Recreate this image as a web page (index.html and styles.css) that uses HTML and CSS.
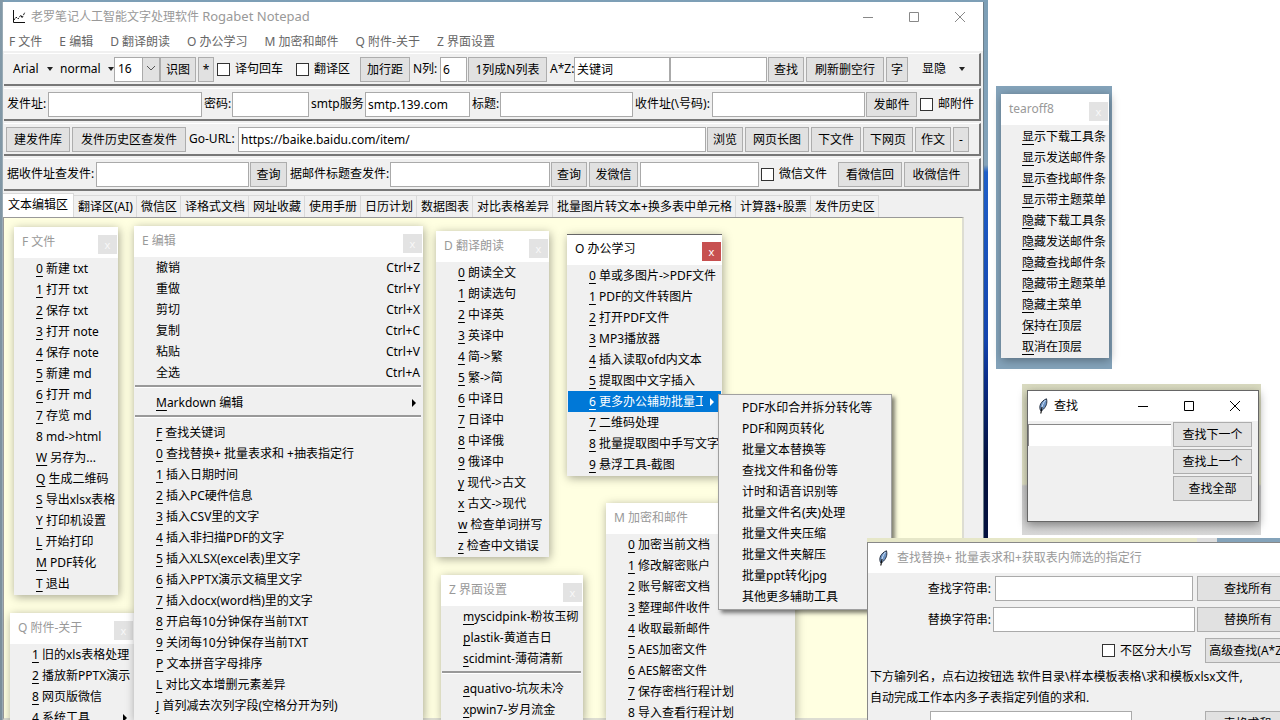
FILE: index.html
```html
<!DOCTYPE html>
<html lang="zh-CN">
<head>
  <meta charset="utf-8">
  <title>老罗笔记人工智能文字处理软件 Rogabet Notepad</title>
  <link rel="stylesheet" href="styles.css">
</head>
<body>
  <svg class="defs">
    <symbol id="feather" viewBox="0 0 12 16">
      <path d="M3.500 12.500C1.500 8 4 3 9.500.800c1 4 0 8-4.500 11.700z" fill="#6c93c4" stroke="#1a2436" stroke-width=".9"/>
      <path d="M8.500 2C6 5 5 8 4.500 12" fill="none" stroke="#d5e5f7" stroke-width=".9"/>
      <path d="M5 9L3.800 15.500" stroke="#111" stroke-width="1.200"/>
    </symbol>
  </svg>

  <div class="desktop"></div>

  <!-- main window -->
  <div class="main-window">
    <div class="titlebar">
      <svg class="logo" width="14" height="14" viewBox="0 0 14 14" fill="none" stroke="#111"><path d="M1.500 0v12.500H13"/><path d="M2 10l2-3 2 2 3-4 1 3 3-6" stroke-dasharray="2 1"/></svg>
      <span class="title">老罗笔记人工智能文字处理软件 <span class="latin">Rogabet Notepad</span></span>
      <button class="win-btn" aria-label="最小化"><svg width="12" height="12"><path d="M1 6.500h10"/></svg></button>
      <button class="win-btn" aria-label="最大化"><svg width="12" height="12"><path d="M1.500 1.500h9v9h-9z"/></svg></button>
      <button class="win-btn" aria-label="关闭"><svg width="12" height="12"><path d="M1 1l10 10M11 1L1 11"/></svg></button>
    </div>
    <div class="menubar">
      <button>F 文件</button>
      <button>E 编辑</button>
      <button>D 翻译朗读</button>
      <button>O 办公学习</button>
      <button>M 加密和邮件</button>
      <button>Q 附件-关于</button>
      <button>Z 界面设置</button>
    </div>

    <div class="toolbar bar-format">
      <button class="drop">Arial</button>
      <button class="drop">normal</button>
      <select aria-label="字号"><option>16</option></select>
      <button class="btn">识图</button>
      <button class="btn">*</button>
      <label class="check"><input type="checkbox">译句回车</label>
      <label class="check"><input type="checkbox">翻译区</label>
      <button class="btn">加行距</button>
      <label for="cols">N列:</label>
      <input type="text" id="cols" value="6">
      <button class="btn">1列成N列表</button>
      <label for="kw">A*Z:</label>
      <input type="text" id="kw" value="关键词">
      <input type="text" aria-label="替换词" class="joined">
      <button class="btn">查找</button>
      <button class="btn">刷新删空行</button>
      <button class="btn">字</button>
      <button class="drop">显隐</button>
    </div>
    <div class="toolbar bar-mail">
      <label for="from">发件址:</label>
      <input type="text" id="from">
      <label for="pwd">密码:</label>
      <input type="password" id="pwd">
      <label for="smtp">smtp服务</label>
      <input type="text" id="smtp" value="smtp.139.com">
      <label for="subject">标题:</label>
      <input type="text" id="subject">
      <label for="to">收件址(\号码):</label>
      <input type="text" id="to">
      <button class="btn">发邮件</button>
      <label class="check"><input type="checkbox">邮附件</label>
    </div>
    <div class="toolbar bar-url">
      <button class="btn">建发件库</button>
      <button class="btn">发件历史区查发件</button>
      <label for="url">Go-URL:</label>
      <input type="text" id="url" value="https://baike.baidu.com/item/">
      <button class="btn">浏览</button>
      <button class="btn">网页长图</button>
      <button class="btn">下文件</button>
      <button class="btn">下网页</button>
      <button class="btn">作文</button>
      <button class="btn">-</button>
    </div>
    <div class="toolbar bar-query">
      <label for="q-to">据收件址查发件:</label>
      <input type="text" id="q-to">
      <button class="btn">查询</button>
      <label for="q-title">据邮件标题查发件:</label>
      <input type="text" id="q-title">
      <button class="btn">查询</button>
      <button class="btn">发微信</button>
      <input type="text" aria-label="微信">
      <label class="check"><input type="checkbox">微信文件</label>
      <button class="btn">看微信回</button>
      <button class="btn">收微信件</button>
    </div>

    <div class="tabs">
      <button class="active">文本编辑区</button>
      <button>翻译区(AI)</button>
      <button>微信区</button>
      <button>译格式文档</button>
      <button>网址收藏</button>
      <button>使用手册</button>
      <button>日历计划</button>
      <button>数据图表</button>
      <button>对比表格差异</button>
      <button>批量图片转文本+换多表中单元格</button>
      <button>计算器+股票</button>
      <button>发件历史区</button>
    </div>
    <textarea class="editor" aria-label="文本编辑区"></textarea>
  </div>

  <!-- torn-off menus -->
  <div class="tearoff menu-file">
    <div class="head"><span>F 文件</span><button aria-label="关闭">x</button></div>
    <ul>
      <li><u>0</u> 新建 txt</li>
      <li><u>1</u> 打开 txt</li>
      <li><u>2</u> 保存 txt</li>
      <li><u>3</u> 打开 note</li>
      <li><u>4</u> 保存 note</li>
      <li><u>5</u> 新建 md</li>
      <li><u>6</u> 打开 md</li>
      <li><u>7</u> 存览 md</li>
      <li>8 md-&gt;html</li>
      <li><u>W</u> 另存为...</li>
      <li><u>Q</u> 生成二维码</li>
      <li><u>S</u> 导出xlsx表格</li>
      <li><u>Y</u> 打印机设置</li>
      <li><u>L</u> 开始打印</li>
      <li><u>M</u> PDF转化</li>
      <li><u>T</u> 退出</li>
    </ul>
  </div>

  <div class="tearoff menu-about">
    <div class="head"><span>Q 附件-关于</span><button aria-label="关闭">x</button></div>
    <ul>
      <li><u>1</u> 旧的xls表格处理</li>
      <li><u>2</u> 播放新PPTX演示</li>
      <li><u>8</u> 网页版微信</li>
      <li class="sub"><span><u>4</u> 系统工具</span></li>
    </ul>
  </div>

  <div class="tearoff menu-edit">
    <div class="head"><span>E 编辑</span><button aria-label="关闭">x</button></div>
    <ul>
      <li>撤销<kbd>Ctrl+Z</kbd></li>
      <li>重做<kbd>Ctrl+Y</kbd></li>
      <li>剪切<kbd>Ctrl+X</kbd></li>
      <li>复制<kbd>Ctrl+C</kbd></li>
      <li>粘贴<kbd>Ctrl+V</kbd></li>
      <li>全选<kbd>Ctrl+A</kbd></li>
      <li class="sep"></li>
      <li class="sub"><span><u>M</u>arkdown 编辑</span></li>
      <li class="sep"></li>
      <li><u>F</u> 查找关键词</li>
      <li><u>0</u> 查找替换+ 批量表求和 +抽表指定行</li>
      <li><u>1</u> 插入日期时间</li>
      <li><u>2</u> 插入PC硬件信息</li>
      <li><u>3</u> 插入CSV里的文字</li>
      <li><u>4</u> 插入非扫描PDF的文字</li>
      <li><u>5</u> 插入XLSX(excel表)里文字</li>
      <li><u>6</u> 插入PPTX演示文稿里文字</li>
      <li><u>7</u> 插入docx(word档)里的文字</li>
      <li><u>8</u> 开启每10分钟保存当前TXT</li>
      <li><u>9</u> 关闭每10分钟保存当前TXT</li>
      <li><u>P</u> 文本拼音字母排序</li>
      <li><u>L</u> 对比文本增删元素差异</li>
      <li><u>J</u> 首列减去次列字段(空格分开为列)</li>
    </ul>
  </div>

  <div class="tearoff menu-translate">
    <div class="head"><span>D 翻译朗读</span><button aria-label="关闭">x</button></div>
    <ul>
      <li><u>0</u> 朗读全文</li>
      <li><u>1</u> 朗读选句</li>
      <li><u>2</u> 中译英</li>
      <li><u>3</u> 英译中</li>
      <li><u>4</u> 简-&gt;繁</li>
      <li><u>5</u> 繁-&gt;简</li>
      <li><u>6</u> 中译日</li>
      <li><u>7</u> 日译中</li>
      <li><u>8</u> 中译俄</li>
      <li><u>9</u> 俄译中</li>
      <li><u>y</u> 现代-&gt;古文</li>
      <li><u>x</u> 古文-&gt;现代</li>
      <li><u>w</u> 检查单词拼写</li>
      <li><u>z</u> 检查中文错误</li>
    </ul>
  </div>

  <div class="tearoff menu-theme">
    <div class="head"><span>Z 界面设置</span><button aria-label="关闭">x</button></div>
    <ul>
      <li><u>m</u>yscidpink-粉妆玉砌</li>
      <li><u>p</u>lastik-黄道吉日</li>
      <li><u>s</u>cidmint-薄荷清新</li>
      <li class="sep"></li>
      <li><u>a</u>quativo-坑灰未冷</li>
      <li><u>x</u>pwin7-岁月流金</li>
    </ul>
  </div>

  <div class="tearoff menu-crypt">
    <div class="head"><span>M 加密和邮件</span><button aria-label="关闭"></button></div>
    <ul>
      <li><u>0</u> 加密当前文档</li>
      <li><u>1</u> 修改解密账户</li>
      <li><u>2</u> 账号解密文档</li>
      <li><u>3</u> 整理邮件收件</li>
      <li><u>4</u> 收取最新邮件</li>
      <li><u>5</u> AES加密文件</li>
      <li><u>6</u> AES解密文件</li>
      <li><u>7</u> 保存密档行程计划</li>
      <li><u>8</u> 导入查看行程计划</li>
    </ul>
  </div>

  <div class="tearoff focused menu-office">
    <div class="head"><span>O 办公学习</span><button aria-label="关闭">x</button></div>
    <ul>
      <li><u>0</u> 单或多图片-&gt;PDF文件</li>
      <li><u>1</u> PDF的文件转图片</li>
      <li><u>2</u> 打开PDF文件</li>
      <li><u>3</u> MP3播放器</li>
      <li><u>4</u> 插入读取ofd内文本</li>
      <li><u>5</u> 提取图中文字插入</li>
      <li class="sub selected"><span><u>6</u> 更多办公辅助批量工具</span></li>
      <li><u>7</u> 二维码处理</li>
      <li><u>8</u> 批量提取图中手写文字</li>
      <li><u>9</u> 悬浮工具-截图</li>
    </ul>
  </div>

  <ul class="submenu">
    <li>PDF水印合并拆分转化等</li>
    <li>PDF和网页转化</li>
    <li>批量文本替换等</li>
    <li>查找文件和备份等</li>
    <li>计时和语音识别等</li>
    <li>批量文件名(夹)处理</li>
    <li>批量文件夹压缩</li>
    <li>批量文件夹解压</li>
    <li>批量ppt转化jpg</li>
    <li>其他更多辅助工具</li>
  </ul>

  <div class="backdrop back-show">
    <div class="tearoff menu-show">
      <div class="head"><span>tearoff8</span><button aria-label="关闭">x</button></div>
      <ul>
        <li><u>显</u>示下载工具条</li>
        <li><u>显</u>示发送邮件条</li>
        <li><u>显</u>示查找邮件条</li>
        <li><u>显</u>示带主题菜单</li>
        <li><u>隐</u>藏下载工具条</li>
        <li><u>隐</u>藏发送邮件条</li>
        <li><u>隐</u>藏查找邮件条</li>
        <li><u>隐</u>藏带主题菜单</li>
        <li><u>隐</u>藏主菜单</li>
        <li><u>保</u>持在顶层</li>
        <li><u>取</u>消在顶层</li>
      </ul>
    </div>
  </div>

  <!-- find dialog -->
  <div class="backdrop back-find">
    <div class="dialog find">
      <div class="titlebar">
        <svg class="logo" width="12" height="16"><use href="#feather"/></svg>
        <span class="title">查找</span>
        <button class="win-btn" aria-label="最小化"><svg width="12" height="12"><path d="M1 6.500h10"/></svg></button>
        <button class="win-btn" aria-label="最大化"><svg width="12" height="12"><path d="M1.500 1.500h9v9h-9z"/></svg></button>
        <button class="win-btn" aria-label="关闭"><svg width="12" height="12"><path d="M1 1l10 10M11 1L1 11"/></svg></button>
      </div>
      <div class="find-body">
        <input type="text" aria-label="查找">
        <div class="find-buttons">
          <button class="btn">查找下一个</button>
          <button class="btn">查找上一个</button>
          <button class="btn">查找全部</button>
        </div>
      </div>
    </div>
  </div>

  <!-- find and replace dialog -->
  <div class="edge"></div>
  <div class="dialog replace">
    <div class="titlebar">
      <svg class="logo" width="12" height="16"><use href="#feather"/></svg>
      <span class="title">查找替换+ 批量表求和+获取表内筛选的指定行</span>
    </div>
    <div class="replace-row">
      <label for="find-str">查找字符串:</label>
      <input type="text" id="find-str">
      <button class="btn">查找所有</button>
    </div>
    <div class="replace-row wide">
      <label for="rep-str">替换字符串:</label>
      <input type="text" id="rep-str">
      <button class="btn">替换所有</button>
    </div>
    <div class="replace-row case">
      <label class="check"><input type="checkbox">不区分大小写</label>
      <button class="btn">高级查找(A*Z)</button>
    </div>
    <p>下方输列名，点右边按钮选 软件目录\样本模板表格\求和模板xlsx文件,<br>自动完成工作本内多子表指定列值的求和.</p>
    <div class="replace-row sum">
      <input type="text" aria-label="列名">
      <button class="btn">表格求和</button>
    </div>
  </div>
</body>
</html>
```
FILE: styles.css
```css
* { box-sizing: border-box; }
html, body { height: 100%; }
body { margin: 0; background: #fff; overflow: hidden; position: relative; font: 12px/20px "Noto Sans", "Noto Sans CJK SC", sans-serif; color: #000; }
button, input, select, textarea { font: inherit; color: inherit; margin: 0; border-radius: 0; }
button { white-space: nowrap; padding: 0; border: none; background: none; }
ul { list-style: none; margin: 0; padding: 0; }
label { white-space: nowrap; }
u { text-underline-offset: 3px; text-decoration-skip-ink: none; }
.defs { position: absolute; width: 0; height: 0; }
.latin { font-size: 13px; }

.desktop { position: absolute; left: 0; right: 292px; top: 0; bottom: 0; background: linear-gradient(#8299a8, #7c8f9c) left / 4px 100% no-repeat, linear-gradient(#7d9fb6 0, #84a3ba 165px, #1f5fc8 172px, #1445ae 340px, #0b2d88 380px, #04123f 460px, #04123f); }

/* windows */
.main-window { position: absolute; left: 2px; right: 296px; top: 2px; bottom: 0; display: flex; flex-direction: column; background: #f0f0f0; border-left: 1px solid #9aabb5; border-right: 1px solid #6d7f8a; }
.titlebar { display: flex; align-items: center; height: 29px; background: #fff; color: #999; }
.titlebar .title { flex: 1; white-space: nowrap; }
.logo { margin: 0 5px 0 9px; flex: none; }
.win-btn { width: 46px; height: 28px; display: flex; align-items: center; justify-content: center; }
.win-btn svg { fill: none; stroke: #888; }
.menubar { display: flex; gap: 17px; padding: 0 6px; height: 20px; background: #fff; color: #666; }
.menubar button { line-height: 21px; }

.toolbar { display: grid; align-items: center; height: 33px; margin: 2px 2px 0 1px; padding: 0 0 0 2px; border-top: 1px solid #fff; border-right: 2px solid #777; border-bottom: 2px solid #777; }
.bar-format { grid-template-columns: 51px 57px 46px 38px 18px 79px 65px 52px 28px 28px 81px 25px 1fr 97px 38px 80px 24px 69px; }
.bar-mail { grid-template-columns: 42px 155px 29px 78px 55px 106px 29px 134px 78px 1fr 53px 60px; }
.bar-url { grid-template-columns: 66px 116px 50px 1fr 38px 66px 52px 52px 38px 26px; }
.bar-query { grid-template-columns: 90px 154px 39px 101px 161px 38px 51px 120px 78px 66px 1fr; }
.toolbar > label { padding-left: 1px; }
.toolbar input[type=text], .toolbar input[type=password] { width: calc(100% - 1px); min-width: 0; }
.toolbar input.joined { width: 100%; margin-left: -1px; }
.toolbar .btn { margin-right: 2px; }
.bar-query .btn:last-child { margin-right: 10px; }
.bar-url .btn:last-child { margin-right: 10px; }

.btn { height: 25px; border: 1px solid #adadad; background: #e1e1e1; line-height: 23px; overflow: hidden; }
input[type=text], input[type=password] { height: 25px; border: 1px solid #aaa; background: #fff; padding: 0 2px; }
select { appearance: none; height: 25px; width: 46px; border: 1px solid #aaa; padding: 0 3px; background: url("data:image/svg+xml,%3Csvg xmlns='http://www.w3.org/2000/svg' width='17' height='25'%3E%3Cpath d='M0 0h17v25H0z' fill='%23e1e1e1'/%3E%3Cpath d='M.5 0v25' stroke='%23aaa'/%3E%3Cpath d='M5 9l4 4 4-4' fill='none' stroke='%23555'/%3E%3C/svg%3E") right center no-repeat #fff; }
.drop { display: flex; align-items: center; justify-content: space-between; padding: 0 4px 0 7px; }
.drop::after { content: ""; border: 4px solid transparent; border-top-color: #222; border-bottom: 0; border-left-width: 3px; border-right-width: 3px; }
.drop:first-child { padding-right: 4px; }
.drop:nth-child(2) { padding: 0 0 0 3px; }
.drop:last-child { padding: 0 14px 0 12px; }
.check { display: flex; align-items: center; gap: 5px; }
.check input { appearance: none; width: 13px; height: 13px; border: 1px solid #333; background: #fff; }

.tabs { display: flex; align-items: flex-end; height: 24px; margin-top: 2px; }
.tabs button { height: 22px; padding: 0 3px 0 4px; border: 1px solid #d9d9d9; border-left-width: 0; border-bottom: none; }
.tabs .active { height: 24px; padding: 0 5px 2px; background: #fff; }
.editor { flex: 1; margin: 0 19px 0 0; border: 2px solid #ddddd2; border-top: 1px solid #999; border-left: 1px solid #999; background: #ffffe1; resize: none; }

/* menus */
.tearoff { position: absolute; background: #f0f0f0; box-shadow: 1px 2px 9px rgba(0,0,0,0.35); overflow: hidden; }
.head { display: flex; align-items: center; justify-content: space-between; height: 31px; padding: 0 1px 2px 8px; background: #fff; color: #999; white-space: nowrap; }
.head button { width: 19px; height: 19px; margin-top: 5px; background: #e3e3e3; color: #f8f8f8; line-height: 17px; font-size: 11px; }
.focused { border-top: 1px solid #666; }
.focused .head { color: #000; height: 30px; }
.focused .head button { background: #c75050; color: #fff; }
.tearoff ul { padding-bottom: 1px; }
.tearoff li { display: flex; align-items: center; white-space: pre; height: 21px; padding: 0 1px 0 22px; }
.tearoff kbd { margin-left: auto; padding-right: 2px; font: inherit; }
.tearoff li.sep { height: 9px; padding: 0; }
.sep::before { content: ""; flex: 1; height: 2px; margin: 0 2px 2px 1px; background: #999; border-bottom: 1px solid #fff; }
.sub span { flex: 1; overflow: hidden; }
.sub::after { content: ""; border: 4px solid transparent; border-left-color: #000; border-right: 0; margin: 0 6px 0 7px; }
.selected { background: #0078d7; color: #fff; margin: 0 1px; }
.tearoff .selected { padding-left: 21px; }
.selected::after { border-left-color: #fff; }

.menu-file { left: 14px; top: 227px; width: 104px; }
.menu-about { left: 10px; top: 613px; width: 124px; }
.menu-edit { left: 134px; top: 226px; width: 289px; bottom: 0; }
.menu-translate { left: 436px; top: 231px; width: 113px; }
.menu-theme { left: 441px; top: 575px; width: 142px; bottom: 0; }
.menu-crypt { left: 606px; top: 503px; width: 189px; bottom: 0; }
.menu-office { left: 567px; top: 234px; width: 155px; }
.submenu { position: absolute; left: 718px; top: 394px; width: 174px; padding: 3px 0 1px 23px; background: #f0f0f0; border: 1px solid #a0a0a0; box-shadow: 3px 3px 4px rgba(0,0,0,0.5); }
.submenu li { height: 21px; white-space: nowrap; }

.backdrop { position: absolute; }
.back-show { left: 996px; top: 86px; width: 116px; height: 283px; background: #84a3ba; }
.menu-show { left: 5px; top: 8px; right: 3px; }
.menu-show ul { padding-top: 1px; }
.menu-show li { padding-left: 21px; }
.back-find { left: 1022px; top: 384px; width: 239px; padding: 6px 2px 13px 5px; background: linear-gradient(#d9dac0 0, #e3e4c8 100px, #ccc 102px, #d8d8d8); }

/* dialogs */
.dialog { background: #f0f0f0; border: 1px solid #666; }
.find { height: 132px; box-shadow: 0 3px 9px rgba(0,0,0,0.4); }
.find .titlebar, .find .title { color: #000; height: 30px; line-height: 30px; }
.find .win-btn svg { stroke: #000; }
.find-body { display: flex; align-items: flex-start; gap: 2px; padding: 1px 6px 0 0; }
.find-body input { flex: 1; min-width: 0; height: 22px; margin-top: 2px; border-width: 1px 0 0 1px; border-color: #888; }
.find-buttons { display: flex; flex-direction: column; gap: 2px; width: 79px; }

.edge { position: absolute; left: 867px; right: 0; top: 538px; height: 5px; background: linear-gradient(90deg, #e6e7c8 330px, #ddd 330px, #ddd 350px, #84a3ba 350px); }
.replace { position: absolute; left: 867px; right: -20px; top: 542px; bottom: -1px; border-color: #888; overflow: hidden; }
.replace .titlebar { height: 30px; }
.replace .logo { margin-right: 8px; }
.replace-row { display: grid; grid-template-columns: 123px 1fr 102px; column-gap: 4px; align-items: center; height: 25px; margin-top: 3px; }
.replace-row label { text-align: right; }
.wide { column-gap: 2px; margin-top: 6px; }
.case { grid-template-columns: 1fr 85px; column-gap: 13px; margin-top: 6px; padding-right: 9px; }
.case .check { justify-content: flex-end; }
.replace p { margin: 3px 0 2px 2px; line-height: 21px; white-space: nowrap; }
.sum { grid-template-columns: 202px 85px; justify-content: space-between; padding: 0 9px 0 62px; }
```
